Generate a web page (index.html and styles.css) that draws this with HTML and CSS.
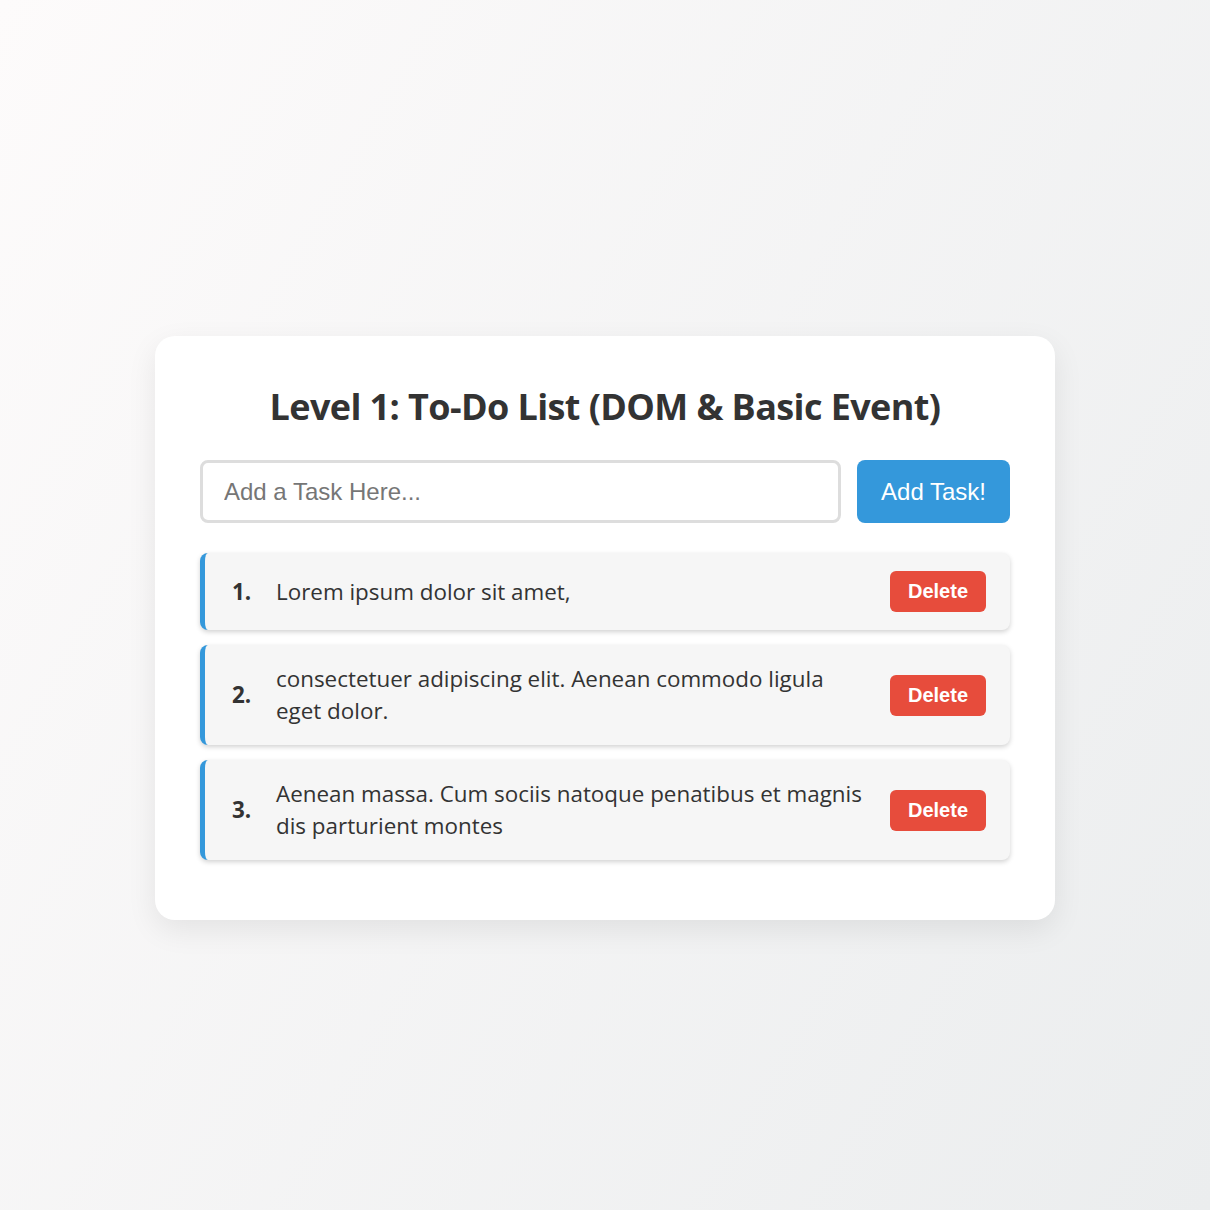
FILE: index.html
```html
<!DOCTYPE html>
<html lang="en">
<head>
<meta charset="utf-8">
<title>Level 1: To-Do List</title>
<link rel="stylesheet" href="styles.css">
</head>
<body>
<main class="card">
  <h1 class="title">Level 1: To-Do List (DOM &amp; Basic Event)</h1>
  <form class="add-row" onsubmit="return false">
    <input class="task-input" type="text" placeholder="Add a Task Here...">
    <button class="add-btn" type="submit">Add Task!</button>
  </form>
  <ol class="task-list">
    <li class="task">
      <span class="num">1.</span>
      <span class="text">Lorem ipsum dolor sit amet,</span>
      <button class="del-btn" type="button">Delete</button>
    </li>
    <li class="task">
      <span class="num">2.</span>
      <span class="text">consectetuer adipiscing elit. Aenean commodo ligula eget dolor.</span>
      <button class="del-btn" type="button">Delete</button>
    </li>
    <li class="task">
      <span class="num">3.</span>
      <span class="text">Aenean massa. Cum sociis natoque penatibus et magnis dis parturient montes</span>
      <button class="del-btn" type="button">Delete</button>
    </li>
  </ol>
</main>
</body>
</html>
```
FILE: styles.css
```css
* { box-sizing: border-box; }

html, body { height: 100%; }

body {
  margin: 0;
  min-height: 100vh;
  padding-top: 46px;
  display: flex;
  align-items: center;
  justify-content: center;
  background: linear-gradient(120deg, #fdfbfb 0%, #ebedee 100%);
  font-family: "Open Sans", "Noto Sans", sans-serif;
  color: #333;
}

.card {
  width: 900px;
  background: #fff;
  border-radius: 20px;
  padding: 45px;
  box-shadow: 0 10px 30px rgba(0, 0, 0, 0.08);
}

.title {
  margin: 0 0 27px;
  text-align: center;
  font-size: 36px;
  font-weight: 700;
  letter-spacing: -0.6px;
  line-height: 52px;
  color: #333;
}

.add-row {
  display: flex;
  gap: 16px;
  height: 63px;
}

.task-input {
  flex: 1;
  min-width: 0;
  border: 3px solid #ddd;
  border-radius: 8px;
  padding: 0 21px;
  font-family: "Liberation Sans", Arial, sans-serif;
  font-size: 24px;
  color: #333;
  outline: none;
}

.task-input::placeholder { color: #767676; }

.add-btn {
  border: none;
  border-radius: 8px;
  background: #3498db;
  color: #fff;
  padding: 0 24px;
  font-family: "Liberation Sans", Arial, sans-serif;
  font-size: 24px;
  cursor: pointer;
}

.task-list {
  list-style: none;
  margin: 30px 0 0;
  padding: 0;
}

.task {
  display: flex;
  align-items: center;
  min-height: 77px;
  margin-bottom: 15px;
  padding: 18px 24px;
  background: #f6f6f6;
  border-left: 5px solid #3498db;
  border-radius: 8px;
  box-shadow: 0 2px 5px rgba(0, 0, 0, 0.18);
  font-size: 22.4px;
  line-height: 32px;
}

.num {
  flex: 0 0 44px;
  margin-left: 3px;
  font-weight: 700;
}

.text {
  flex: 1;
  padding-right: 20px;
}

.del-btn {
  flex: none;
  border: none;
  border-radius: 6px;
  background: #e74c3c;
  color: #fff;
  padding: 9px 18px;
  font-family: "Liberation Sans", Arial, sans-serif;
  font-size: 20px;
  font-weight: 700;
  line-height: 23px;
  cursor: pointer;
}
```
